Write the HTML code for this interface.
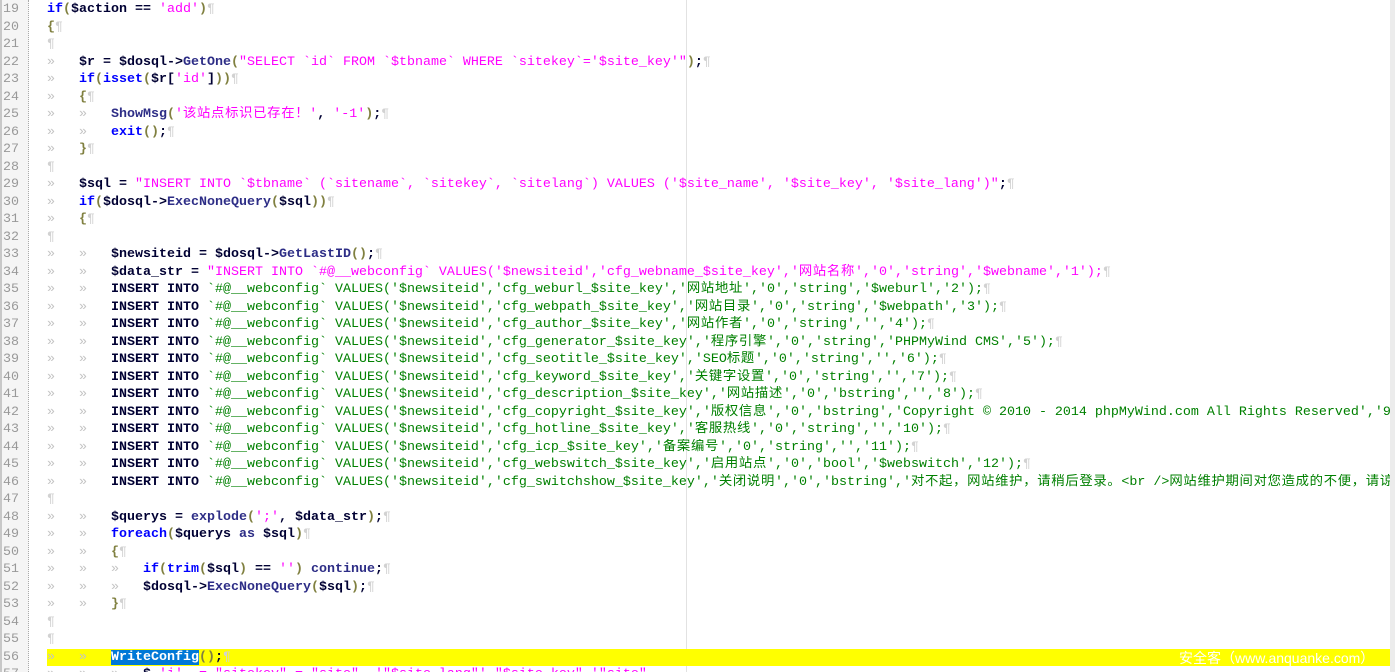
<!DOCTYPE html>
<html><head><meta charset="utf-8"><style>
html,body{margin:0;padding:0;width:1395px;height:672px;overflow:hidden;background:#fff;position:relative}
#gut{position:absolute;left:0;top:0;width:29px;height:672px;background:#f5f5f5;border-left:2px solid #c8c8c8;box-sizing:border-box;border-right:1px dotted #aaa}
#edge{position:absolute;left:686px;top:0;width:1px;height:672px;background:#e2e2e2}
#sb{position:absolute;left:1390px;top:0;width:5px;height:672px;background:#ececec}
#nums{position:absolute;left:3px;top:1px;width:24px;height:671px;overflow:hidden;font:13.33px "Liberation Mono",monospace;color:#999;line-height:17.5px}
#nums div{height:17.5px}
#code{position:absolute;left:47px;top:1px;width:1343px;height:671px;overflow:hidden;font:bold 13.33px "Liberation Mono",monospace;line-height:17.5px;color:#000033}
#code div{height:17.5px;white-space:pre;overflow:hidden}
.hl{background:#ffff00}
.t{display:inline-block;width:32px;color:#c4c4c4;font-weight:normal}
.p{color:#d2d2d2;font-weight:normal}
.k{color:#0000ff}
.f{color:#2d2d86}
.s{color:#ff00ff;font-weight:normal}
.g{color:#008000;font-weight:normal}
.o{color:#808040}
.c{font-family:"Noto Sans CJK SC",sans-serif;font-weight:normal;letter-spacing:.7px;line-height:1px}
.sel{background:#0078d7;color:#fff}
#wm{position:absolute;left:1179px;top:648px;font:14px "Liberation Sans","Noto Sans CJK SC",sans-serif;color:#fff}
</style></head><body>
<div id="gut"></div>
<div id="edge"></div>
<div id="nums"><div>19</div><div>20</div><div>21</div><div>22</div><div>23</div><div>24</div><div>25</div><div>26</div><div>27</div><div>28</div><div>29</div><div>30</div><div>31</div><div>32</div><div>33</div><div>34</div><div>35</div><div>36</div><div>37</div><div>38</div><div>39</div><div>40</div><div>41</div><div>42</div><div>43</div><div>44</div><div>45</div><div>46</div><div>47</div><div>48</div><div>49</div><div>50</div><div>51</div><div>52</div><div>53</div><div>54</div><div>55</div><div>56</div><div>57</div></div>
<div id="code">
<div><span class="k">if</span><span class="o">(</span>$action == <span class="s">'add'</span><span class="o">)</span><span class="p">¶</span></div>
<div><span class="o">{</span><span class="p">¶</span></div>
<div><span class="p">¶</span></div>
<div><span class="t">»</span>$r = $dosql-&gt;<span class="f">GetOne</span><span class="o">(</span><span class="s">"SELECT `id` FROM `$tbname` WHERE `sitekey`='$site_key'"</span><span class="o">)</span>;<span class="p">¶</span></div>
<div><span class="t">»</span><span class="k">if</span><span class="o">(</span><span class="k">isset</span><span class="o">(</span>$r[<span class="s">'id'</span>]<span class="o">))</span><span class="p">¶</span></div>
<div><span class="t">»</span><span class="o">{</span><span class="p">¶</span></div>
<div><span class="t">»</span><span class="t">»</span><span class="f">ShowMsg</span><span class="o">(</span><span class="s">'<span class="c">该站点标识已存在！</span>'</span>, <span class="s">'-1'</span><span class="o">)</span>;<span class="p">¶</span></div>
<div><span class="t">»</span><span class="t">»</span><span class="k">exit</span><span class="o">()</span>;<span class="p">¶</span></div>
<div><span class="t">»</span><span class="o">}</span><span class="p">¶</span></div>
<div><span class="p">¶</span></div>
<div><span class="t">»</span>$sql = <span class="s">"INSERT INTO `$tbname` (`sitename`, `sitekey`, `sitelang`) VALUES ('$site_name', '$site_key', '$site_lang')"</span>;<span class="p">¶</span></div>
<div><span class="t">»</span><span class="k">if</span><span class="o">(</span>$dosql-&gt;<span class="f">ExecNoneQuery</span><span class="o">(</span>$sql<span class="o">))</span><span class="p">¶</span></div>
<div><span class="t">»</span><span class="o">{</span><span class="p">¶</span></div>
<div><span class="p">¶</span></div>
<div><span class="t">»</span><span class="t">»</span>$newsiteid = $dosql-&gt;<span class="f">GetLastID</span><span class="o">()</span>;<span class="p">¶</span></div>
<div><span class="t">»</span><span class="t">»</span>$data_str = <span class="s">"INSERT INTO `#@__webconfig` VALUES('$newsiteid','cfg_webname_$site_key','<span class="c">网站名称</span>','0','string','$webname','1');</span><span class="p">¶</span></div>
<div><span class="t">»</span><span class="t">»</span>INSERT INTO <span class="g">`#@__webconfig` VALUES('$newsiteid','cfg_weburl_$site_key','<span class="c">网站地址</span>','0','string','$weburl','2');</span><span class="p">¶</span></div>
<div><span class="t">»</span><span class="t">»</span>INSERT INTO <span class="g">`#@__webconfig` VALUES('$newsiteid','cfg_webpath_$site_key','<span class="c">网站目录</span>','0','string','$webpath','3');</span><span class="p">¶</span></div>
<div><span class="t">»</span><span class="t">»</span>INSERT INTO <span class="g">`#@__webconfig` VALUES('$newsiteid','cfg_author_$site_key','<span class="c">网站作者</span>','0','string','','4');</span><span class="p">¶</span></div>
<div><span class="t">»</span><span class="t">»</span>INSERT INTO <span class="g">`#@__webconfig` VALUES('$newsiteid','cfg_generator_$site_key','<span class="c">程序引擎</span>','0','string','PHPMyWind CMS','5');</span><span class="p">¶</span></div>
<div><span class="t">»</span><span class="t">»</span>INSERT INTO <span class="g">`#@__webconfig` VALUES('$newsiteid','cfg_seotitle_$site_key','SEO<span class="c">标题</span>','0','string','','6');</span><span class="p">¶</span></div>
<div><span class="t">»</span><span class="t">»</span>INSERT INTO <span class="g">`#@__webconfig` VALUES('$newsiteid','cfg_keyword_$site_key','<span class="c">关键字设置</span>','0','string','','7');</span><span class="p">¶</span></div>
<div><span class="t">»</span><span class="t">»</span>INSERT INTO <span class="g">`#@__webconfig` VALUES('$newsiteid','cfg_description_$site_key','<span class="c">网站描述</span>','0','bstring','','8');</span><span class="p">¶</span></div>
<div><span class="t">»</span><span class="t">»</span>INSERT INTO <span class="g">`#@__webconfig` VALUES('$newsiteid','cfg_copyright_$site_key','<span class="c">版权信息</span>','0','bstring','Copyright © 2010 - 2014 phpMyWind.com All Rights Reserved','9');</span></div>
<div><span class="t">»</span><span class="t">»</span>INSERT INTO <span class="g">`#@__webconfig` VALUES('$newsiteid','cfg_hotline_$site_key','<span class="c">客服热线</span>','0','string','','10');</span><span class="p">¶</span></div>
<div><span class="t">»</span><span class="t">»</span>INSERT INTO <span class="g">`#@__webconfig` VALUES('$newsiteid','cfg_icp_$site_key','<span class="c">备案编号</span>','0','string','','11');</span><span class="p">¶</span></div>
<div><span class="t">»</span><span class="t">»</span>INSERT INTO <span class="g">`#@__webconfig` VALUES('$newsiteid','cfg_webswitch_$site_key','<span class="c">启用站点</span>','0','bool','$webswitch','12');</span><span class="p">¶</span></div>
<div><span class="t">»</span><span class="t">»</span>INSERT INTO <span class="g">`#@__webconfig` VALUES('$newsiteid','cfg_switchshow_$site_key','<span class="c">关闭说明</span>','0','bstring','<span class="c">对不起，网站维护，请稍后登录。</span>&lt;br /&gt;<span class="c">网站维护期间对您造成的不便，请谅解！</span>','13');</span></div>
<div><span class="p">¶</span></div>
<div><span class="t">»</span><span class="t">»</span>$querys = <span class="f">explode</span><span class="o">(</span><span class="s">';'</span>, $data_str<span class="o">)</span>;<span class="p">¶</span></div>
<div><span class="t">»</span><span class="t">»</span><span class="k">foreach</span><span class="o">(</span>$querys <span class="f">as</span> $sql<span class="o">)</span><span class="p">¶</span></div>
<div><span class="t">»</span><span class="t">»</span><span class="o">{</span><span class="p">¶</span></div>
<div><span class="t">»</span><span class="t">»</span><span class="t">»</span><span class="k">if</span><span class="o">(</span><span class="k">trim</span><span class="o">(</span>$sql<span class="o">)</span> == <span class="s">''</span><span class="o">)</span> <span class="f">continue</span>;<span class="p">¶</span></div>
<div><span class="t">»</span><span class="t">»</span><span class="t">»</span>$dosql-&gt;<span class="f">ExecNoneQuery</span><span class="o">(</span>$sql<span class="o">)</span>;<span class="p">¶</span></div>
<div><span class="t">»</span><span class="t">»</span><span class="o">}</span><span class="p">¶</span></div>
<div><span class="p">¶</span></div>
<div><span class="p">¶</span></div>
<div class="hl"><span class="t">»</span><span class="t">»</span><span class="sel">WriteConfig</span><span class="o">()</span>;<span class="p">¶</span></div>
<div><span class="t">»</span><span class="t">»</span><span class="t">»</span>$_<span class="s">'i'  = "sitekey" = "site"  '"$site_lang"' "$site_key" '"site"</span></div>
</div>
<div id="sb"></div>
<div id="wm">安全客（www.anquanke.com）</div>
</body></html>
